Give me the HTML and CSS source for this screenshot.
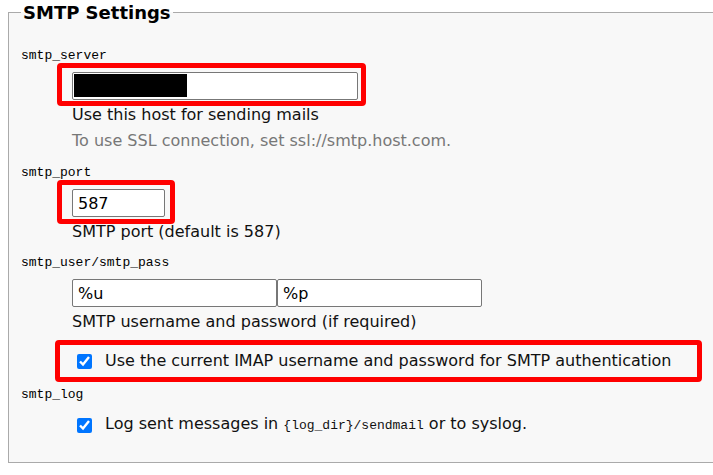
FILE: index.html
```html
<!DOCTYPE html>
<html lang="en">
<head>
    <meta charset="UTF-8">
    <title>SMTP Settings</title>
    <link rel="stylesheet" href="styles.css">
</head>
<body>
    <fieldset class="settings">
        <legend>SMTP Settings</legend>

        <div class="label first">smtp_server</div>
        <div class="field">
            <span class="mark mark-server"><input type="text" class="input-server" value=""><span class="redacted"></span></span>
            <div class="desc">Use this host for sending mails</div>
            <div class="hint">To use SSL connection, set ssl://smtp.host.com.</div>
        </div>

        <div class="label port">smtp_port</div>
        <div class="field">
            <span class="mark mark-port"><input type="text" class="input-port" value="587"></span>
            <div class="desc">SMTP port (default is 587)</div>
        </div>

        <div class="label user">smtp_user/smtp_pass</div>
        <div class="field">
            <div class="pair">
                <input type="text" class="input-user" value="%u">
                <input type="text" class="input-user" value="%p">
            </div>
            <div class="desc">SMTP username and password (if required)</div>
            <div class="mark mark-check">
                <label class="check"><input type="checkbox" checked><span>Use the current IMAP username and password for SMTP authentication</span></label>
            </div>
        </div>

        <div class="label log">smtp_log</div>
        <div class="field">
            <label class="check log-check"><input type="checkbox" checked><span>Log sent messages in <code>{log_dir}/sendmail</code> or to syslog.</span></label>
        </div>
    </fieldset>
</body>
</html>
```

FILE: styles.css
```css
body { margin: 0; background: #fff; font-family: "DejaVu Sans", Verdana, sans-serif; font-size: 16px; color: #111; }
.settings { margin: 2px 0 0 8px; width: 705px; padding: 0 0 26px 12px; border: 1px solid #aaa; border-right: none; background: #f8f8f8; box-sizing: border-box; }
.settings legend { font-weight: bold; font-size: 18px; padding: 0 2px; margin-left: 0; color: #000; }
.label { font-family: "Liberation Mono", monospace; font-size: 13px; line-height: 16px; margin-top: 15px; color: #000; }
.label.first { margin-top: 25px; }
.label.port { margin-top: 14px; }
.label.user { margin-top: 13px; }
.label.log { margin-top: 5px; }
.field { margin-left: 51px; }
input[type=text] { font-family: "DejaVu Sans", Verdana, sans-serif; font-size: 16px; color: #000; border: 1px solid #777; border-radius: 2px; background: #fff; padding: 2px 5px; height: 28px; box-sizing: border-box; margin: 0; vertical-align: top; }
.mark { position: relative; display: inline-block; vertical-align: top; }
.mark::after { content: ""; position: absolute; border: 5px solid #f00; border-radius: 4px; pointer-events: none; }
.mark-server, .mark-port { margin-top: 8px; }
.mark-server::after { left: -15px; right: -8px; top: -9px; bottom: -6px; }
.mark-port::after { left: -15px; right: -10px; top: -9px; bottom: -7px; }
.input-server { width: 286px; }
.input-port { width: 93px; height: 26px; }
.redacted { position: absolute; left: 2px; top: 2px; width: 113px; height: 23px; background: #000; }
.desc { margin-top: 5px; line-height: 20px; }
.hint { color: #777; margin-top: 6px; line-height: 20px; }
.pair { display: flex; margin-top: 8px; }
.input-user { width: 205px; }
.mark-check { display: block; margin: 8px 0 0 -17px; width: 647px; height: 42px; box-sizing: border-box; padding: 0 0 0 17px; }
.mark-check::after { inset: 0; }
.mark-check .check { height: 42px; }
.check { display: flex; align-items: center; gap: 13px; line-height: 20px; }
.check input { margin: 0 0 0 5px; width: 15px; height: 15px; flex: none; }
.check code { font-family: "Liberation Mono", monospace; font-size: 13px; }
.log-check { margin: 11px 0 0 0; }
```
